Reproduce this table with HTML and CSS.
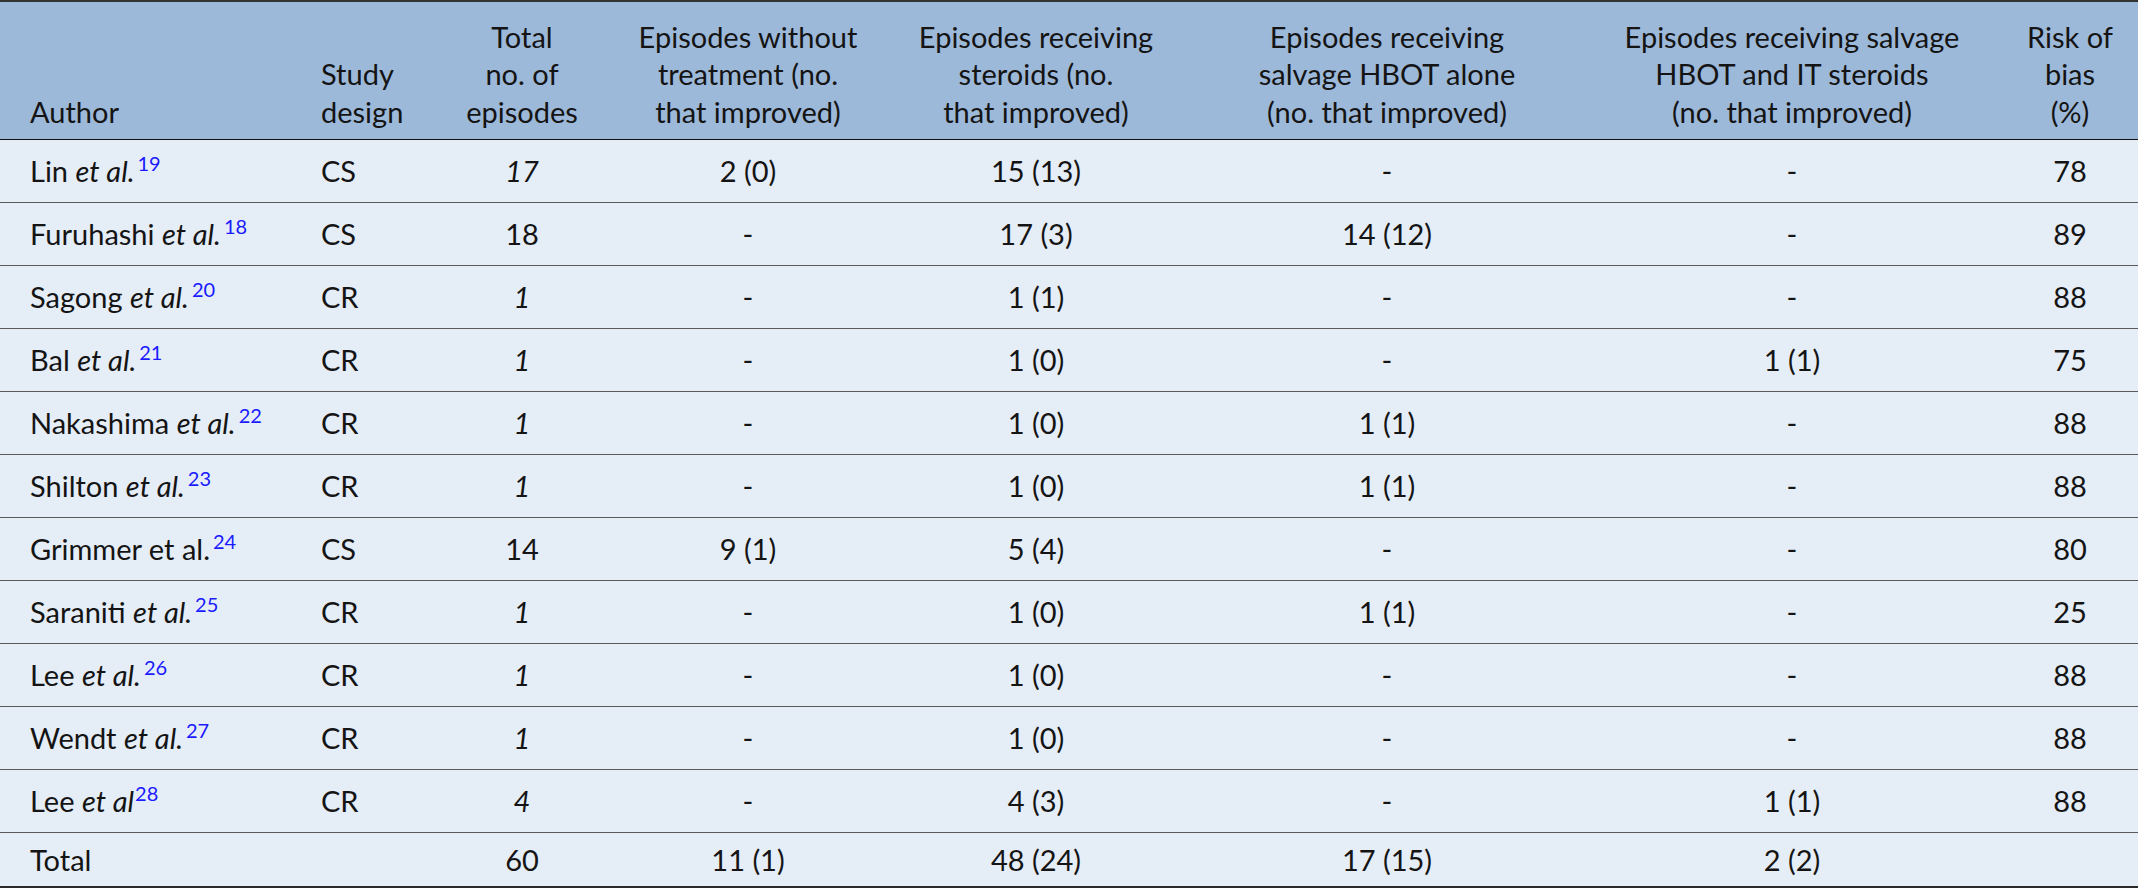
FILE: index.html
```html
<!DOCTYPE html>
<html lang="en">
<head>
<meta charset="utf-8">
<title>Table</title>
<link rel="stylesheet" href="styles.css">
</head>
<body>
<table class="data">
  <colgroup>
    <col class="c-author">
    <col class="c-design">
    <col class="c-total">
    <col class="c-none">
    <col class="c-ster">
    <col class="c-hbot">
    <col class="c-hbotit">
    <col class="c-risk">
  </colgroup>
  <thead>
    <tr>
      <th class="left first">Author</th>
      <th class="left second">Study<br>design</th>
      <th>Total<br>no. of<br>episodes</th>
      <th>Episodes without<br>treatment (no.<br>that improved)</th>
      <th>Episodes receiving<br>steroids (no.<br>that improved)</th>
      <th>Episodes receiving<br>salvage HBOT alone<br>(no. that improved)</th>
      <th>Episodes receiving salvage<br>HBOT and IT steroids<br>(no. that improved)</th>
      <th>Risk of<br>bias<br>(%)</th>
    </tr>
  </thead>
  <tbody>
    <tr>
      <td class="left first">Lin <i>et al.</i><sup class="ref">19</sup></td>
      <td class="left second">CS</td>
      <td><i>17</i></td>
      <td>2 (0)</td>
      <td>15 (13)</td>
      <td>-</td>
      <td>-</td>
      <td>78</td>
    </tr>
    <tr>
      <td class="left first">Furuhashi <i>et al.</i><sup class="ref">18</sup></td>
      <td class="left second">CS</td>
      <td>18</td>
      <td>-</td>
      <td>17 (3)</td>
      <td>14 (12)</td>
      <td>-</td>
      <td>89</td>
    </tr>
    <tr>
      <td class="left first">Sagong <i>et al.</i><sup class="ref">20</sup></td>
      <td class="left second">CR</td>
      <td><i>1</i></td>
      <td>-</td>
      <td>1 (1)</td>
      <td>-</td>
      <td>-</td>
      <td>88</td>
    </tr>
    <tr>
      <td class="left first">Bal <i>et al.</i><sup class="ref">21</sup></td>
      <td class="left second">CR</td>
      <td><i>1</i></td>
      <td>-</td>
      <td>1 (0)</td>
      <td>-</td>
      <td>1 (1)</td>
      <td>75</td>
    </tr>
    <tr>
      <td class="left first">Nakashima <i>et al.</i><sup class="ref">22</sup></td>
      <td class="left second">CR</td>
      <td><i>1</i></td>
      <td>-</td>
      <td>1 (0)</td>
      <td>1 (1)</td>
      <td>-</td>
      <td>88</td>
    </tr>
    <tr>
      <td class="left first">Shilton <i>et al.</i><sup class="ref">23</sup></td>
      <td class="left second">CR</td>
      <td><i>1</i></td>
      <td>-</td>
      <td>1 (0)</td>
      <td>1 (1)</td>
      <td>-</td>
      <td>88</td>
    </tr>
    <tr>
      <td class="left first">Grimmer et al.<sup class="ref">24</sup></td>
      <td class="left second">CS</td>
      <td>14</td>
      <td>9 (1)</td>
      <td>5 (4)</td>
      <td>-</td>
      <td>-</td>
      <td>80</td>
    </tr>
    <tr>
      <td class="left first">Saraniti <i>et al.</i><sup class="ref">25</sup></td>
      <td class="left second">CR</td>
      <td><i>1</i></td>
      <td>-</td>
      <td>1 (0)</td>
      <td>1 (1)</td>
      <td>-</td>
      <td>25</td>
    </tr>
    <tr>
      <td class="left first">Lee <i>et al.</i><sup class="ref">26</sup></td>
      <td class="left second">CR</td>
      <td><i>1</i></td>
      <td>-</td>
      <td>1 (0)</td>
      <td>-</td>
      <td>-</td>
      <td>88</td>
    </tr>
    <tr>
      <td class="left first">Wendt <i>et al.</i><sup class="ref">27</sup></td>
      <td class="left second">CR</td>
      <td><i>1</i></td>
      <td>-</td>
      <td>1 (0)</td>
      <td>-</td>
      <td>-</td>
      <td>88</td>
    </tr>
    <tr>
      <td class="left first">Lee <i>et al</i><sup class="ref tight">28</sup></td>
      <td class="left second">CR</td>
      <td><i>4</i></td>
      <td>-</td>
      <td>4 (3)</td>
      <td>-</td>
      <td>1 (1)</td>
      <td>88</td>
    </tr>
    <tr class="total">
      <td class="left first">Total</td>
      <td class="left second"></td>
      <td>60</td>
      <td>11 (1)</td>
      <td>48 (24)</td>
      <td>17 (15)</td>
      <td>2 (2)</td>
      <td></td>
    </tr>
  </tbody>
</table>
</body>
</html>
```

FILE: styles.css
```css
html, body {
  margin: 0;
  padding: 0;
  background: #ffffff;
}

.data {
  width: 2138px;
  table-layout: fixed;
  border-collapse: collapse;
  font-family: "Lato", "Source Sans Pro", "Open Sans", sans-serif;
  font-size: 29px;
  color: #141414;
}

.c-author { width: 309px; }
.c-design { width: 119px; }
.c-total  { width: 188px; }
.c-none   { width: 264px; }
.c-ster   { width: 312px; }
.c-hbot   { width: 390px; }
.c-hbotit { width: 420px; }
.c-risk   { width: 136px; }

.data th,
.data td {
  padding: 0;
  text-align: center;
  white-space: nowrap;
}

.data th {
  font-weight: 400;
  background: #9db9d9;
  vertical-align: bottom;
  line-height: 37.5px;
  height: 128px;
  padding-bottom: 9px;
  border-top: 2px solid #333333;
  border-bottom: 1px solid #111111;
}

.data td {
  background: #e5edf7;
  height: 62px;
  line-height: 34px;
  vertical-align: middle;
  border-bottom: 1px solid #5a5a5a;
}

.data .left { text-align: left; }
.data .first { padding-left: 30px; }
.data .second { padding-left: 12px; }

.data tr.total td {
  height: 53px;
  border-bottom: 2px solid #2a2a2a;
}

.ref {
  color: #1a1aff;
  font-size: 20px;
  line-height: 0;
  vertical-align: 11px;
  margin-left: 3px;
}

.ref.tight { margin-left: 1px; }
```
